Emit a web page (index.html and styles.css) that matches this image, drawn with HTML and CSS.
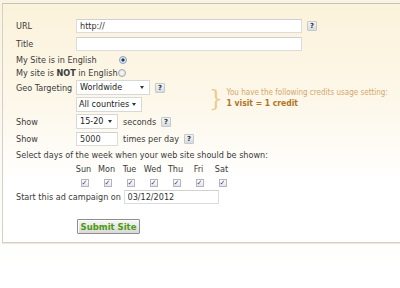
FILE: index.html
```html
<!DOCTYPE html>
<html lang="en">
<head>
    <meta charset="UTF-8">
    <title>Submit Site</title>
    <link rel="stylesheet" href="styles.css">
</head>
<body>

    <div class="panel">
        <table class="form">
            <tr class="row-input">
                <td class="lbl">URL</td>
                <td colspan="2"><input class="text wide" type="text" value="http://"><span class="help">?</span></td>
            </tr>
            <tr class="row-input">
                <td class="lbl">Title</td>
                <td colspan="2"><input class="text wide" type="text" value=""></td>
            </tr>
            <tr class="row-radio">
                <td colspan="3"><span class="radio-lbl">My Site is in English</span><span class="radio on"></span></td>
            </tr>
            <tr class="row-radio">
                <td colspan="3"><span class="radio-lbl">My site is <b>NOT</b> in English</span><span class="radio"></span></td>
            </tr>
            <tr class="row-select">
                <td class="lbl">Geo Targeting</td>
                <td class="ctrl"><span class="select w-geo">Worldwide</span><span class="help">?</span></td>
                <td class="note" rowspan="2">
                    <span class="brace">}</span>
                    <span class="note-text">You have the following credits usage setting:<br><b>1 visit = 1 credit</b></span>
                </td>
            </tr>
            <tr class="row-select">
                <td></td>
                <td class="ctrl"><span class="select w-country">All countries</span></td>
            </tr>
            <tr class="row-select">
                <td class="lbl">Show</td>
                <td colspan="2"><span class="select w-sec">15-20</span><span class="after">seconds</span><span class="help">?</span></td>
            </tr>
            <tr class="row-select">
                <td class="lbl">Show</td>
                <td colspan="2"><input class="text w-times" type="text" value="5000"><span class="after">times per day</span><span class="help">?</span></td>
            </tr>
            <tr class="row-text">
                <td colspan="3">Select days of the week when your web site should be shown:</td>
            </tr>
            <tr>
                <td></td>
                <td colspan="2">
                    <table class="days">
                        <tr class="day-names">
                            <td>Sun</td><td>Mon</td><td>Tue</td><td>Wed</td><td>Thu</td><td>Fri</td><td>Sat</td>
                        </tr>
                        <tr class="day-checks">
                            <td><span class="check">✓</span></td>
                            <td><span class="check">✓</span></td>
                            <td><span class="check">✓</span></td>
                            <td><span class="check">✓</span></td>
                            <td><span class="check">✓</span></td>
                            <td><span class="check">✓</span></td>
                            <td><span class="check">✓</span></td>
                        </tr>
                    </table>
                </td>
            </tr>
            <tr class="row-text">
                <td colspan="3">Start this ad campaign on <input class="text w-date" type="text" value="03/12/2012"></td>
            </tr>
            <tr class="row-submit">
                <td></td>
                <td colspan="2"><button class="submit" type="button">Submit Site</button></td>
            </tr>
        </table>
    </div>

</body>
</html>
```

FILE: styles.css
```css
html, body {
    margin: 0;
    padding: 0;
}
body {
    font-family: 'DejaVu Sans Condensed', 'DejaVu Sans', Verdana, sans-serif;
    font-size: 9px;
    color: #3a3a3a;
    background: linear-gradient(#faf3df, #ffffff 270px);
    height: 288px;
    overflow: hidden;
}
.panel {
    margin: 3px 0 0 2px;
    width: 420px;
    padding: 13px 0 8px 13px;
    border: 1px solid #d2d0cb;
    border-top-color: #c4c2bd;
    background: linear-gradient(#fbf2da, #fdf8ec 45%, #ffffff 75%);
    box-shadow: 0 1px 0 #efe9da;
}

/* form table */
.form {
    border-collapse: collapse;
    border-spacing: 0;
    table-layout: fixed;
}
.form td {
    padding: 0;
    vertical-align: middle;
    white-space: nowrap;
}
.form td.lbl {
    width: 60px;
}
.row-input td { height: 18px; }
.row-radio td { height: 13px; }
.row-select td { height: 17px; }
.row-text td { height: 15px; }
.row-submit td {
    height: 30px;
    vertical-align: bottom;
}
.ctrl {
    width: 129px;
}

/* inputs */
.text {
    font-family: inherit;
    font-size: 9px;
    color: #333;
    height: 14px;
    box-sizing: border-box;
    border: 1px solid #dcdcdc;
    border-top-color: #d0d0d0;
    padding: 0 3px;
    margin: 0;
    background: #fff;
    vertical-align: middle;
}
.wide { width: 226px; }
.w-times { width: 42px; }
.w-date { width: 95px; margin-left: 0; }

.select {
    display: inline-block;
    position: relative;
    box-sizing: border-box;
    height: 15px;
    line-height: 13px;
    border: 1px solid #d8d8d8;
    background: #fff;
    padding: 0 0 0 3px;
    vertical-align: middle;
    color: #222;
}
.select::after {
    content: "";
    position: absolute;
    right: 5px;
    top: 5px;
    border-left: 2px solid transparent;
    border-right: 2px solid transparent;
    border-top: 3px solid #333;
}
.w-geo { width: 74px; }
.w-country { width: 66px; padding-left: 2px; }
.w-sec { width: 42px; }

.after {
    margin-left: 5px;
    vertical-align: middle;
}

.help {
    display: inline-block;
    box-sizing: border-box;
    width: 10px;
    height: 10px;
    margin-left: 5px;
    border: 1px solid #c6c9cc;
    border-radius: 1px;
    background: linear-gradient(#f2f5f7, #d5dde2);
    font-family: 'DejaVu Sans', sans-serif;
    font-size: 7px;
    font-weight: bold;
    line-height: 8px;
    text-align: center;
    color: #333;
    vertical-align: middle;
}

/* radios */
.radio-lbl {
    display: inline-block;
    width: 102px;
    vertical-align: middle;
}
.radio {
    display: inline-block;
    box-sizing: border-box;
    width: 8px;
    height: 8px;
    border-radius: 50%;
    border: 1px solid #a9a9a9;
    background: radial-gradient(#fafafa, #dcdcdc);
    vertical-align: middle;
}
.radio.on {
    border-color: #8aa3c4;
    background: radial-gradient(#2b3a55 30%, #dfe7f2 45%);
    margin-left: 1px;
}

/* credits note */
.note {
    padding: 5px 0 0 4px !important;
}
.brace {
    font-family: 'DejaVu Serif', serif;
    font-size: 22px;
    line-height: 20px;
    color: #edc98c;
    vertical-align: middle;
    display: inline-block;
    width: 15px;
}
.note-text {
    display: inline-block;
    vertical-align: middle;
    font-size: 8px;
    line-height: 10px;
    color: #d3a86a;
}
.note-text b {
    font-size: 8.5px;
    color: #b07424;
}

/* days */
.days {
    border-collapse: collapse;
    margin-left: -4px;
}
.days td {
    width: 23px;
    padding: 0;
    text-align: center;
}
.day-names td { height: 14px; }
.day-checks td { height: 13px; }
.check {
    display: inline-block;
    box-sizing: border-box;
    width: 8px;
    height: 8px;
    border: 1px solid #b5b5b5;
    background: linear-gradient(#ffffff, #e6e6e6);
    font-family: 'DejaVu Sans', sans-serif;
    font-size: 7px;
    line-height: 6px;
    color: #2c48b0;
    vertical-align: middle;
    margin-left: 2px;
}

/* submit */
.submit {
    font-family: 'DejaVu Sans', Verdana, sans-serif;
    font-size: 8.5px;
    font-weight: bold;
    color: #4c9a12;
    height: 15px;
    width: 63px;
    padding: 0;
    border: 1px solid #8d8d8d;
    border-radius: 1px;
    background: linear-gradient(#f7f7f7, #d9d9d9);
    box-shadow: inset 1px 1px 0 #fff;
    margin-left: 1px;
}
```
